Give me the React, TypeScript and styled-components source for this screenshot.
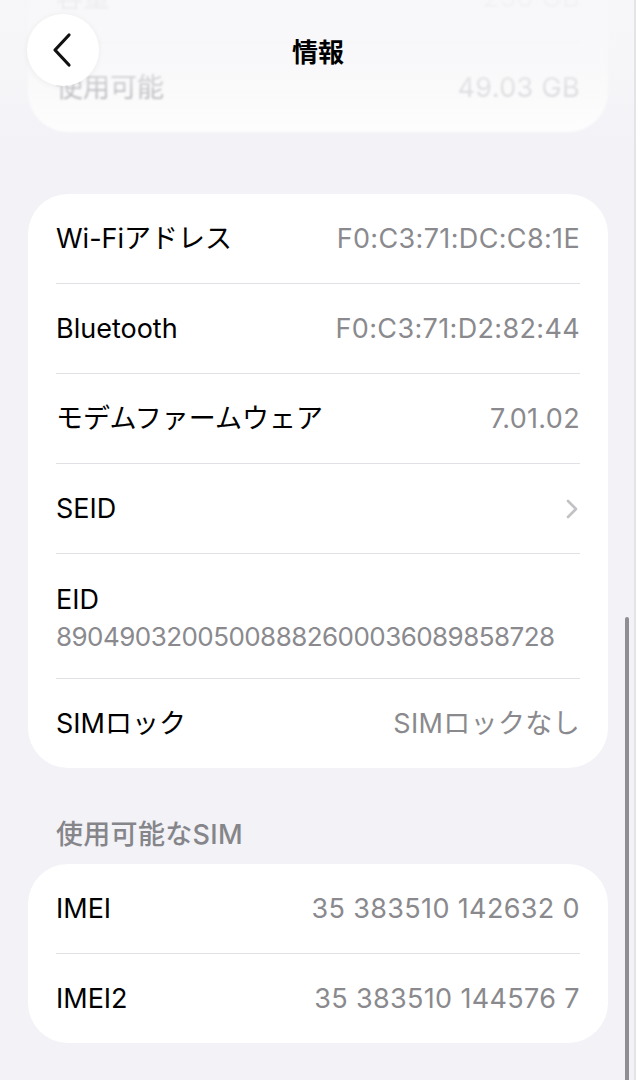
import React from "react";
import styled, { createGlobalStyle } from "styled-components";

const Global = createGlobalStyle`
  html, body { margin: 0; padding: 0; background: #f2f2f7; }
  body {
    font-family: "Inter", "Noto Sans CJK JP", sans-serif;
    -webkit-font-smoothing: antialiased;
    overflow: hidden;
  }
`;

const Screen = styled.div`
  position: relative;
  width: 636px;
  height: 1080px;
  overflow: hidden;
  background: #f2f2f7;
`;

const Content = styled.div`
  display: flex;
  flex-direction: column;
  padding: 0 28px;
  margin-top: -47px;
`;

const Card = styled.div<{ $faded?: boolean; $gap?: number }>`
  background: #ffffff;
  border-radius: 40px;
  padding: 0 28px;
  margin-top: ${(p) => p.$gap ?? 0}px;
  display: flex;
  flex-direction: column;
  ${(p) => (p.$faded ? "filter: blur(1.3px);" : "")}
`;

const Row = styled.div<{ $last?: boolean }>`
  display: flex;
  align-items: center;
  justify-content: space-between;
  height: ${(p) => (p.$last ? 89 : 90)}px;
  box-sizing: border-box;
  border-bottom: ${(p) => (p.$last ? "none" : "1px solid #e1e1e5")};
`;

const StackRow = styled.div`
  display: flex;
  flex-direction: column;
  padding: 28px 0 22px;
  box-sizing: border-box;
  border-bottom: 1px solid #e1e1e5;
`;

const Label = styled.span<{ $faded?: boolean }>`
  font-size: 27px;
  line-height: 36px;
  color: ${(p) => (p.$faded ? "#77777c" : "#000000")};
  letter-spacing: 0px;
`;

const Value = styled.span<{ $faded?: boolean }>`
  font-size: 27px;
  line-height: 36px;
  color: ${(p) => (p.$faded ? "#b9b9bd" : "#8a8a8e")};
  letter-spacing: 0.35px;
`;

const LongValue = styled(Value)`
  font-size: 26px;
  line-height: 38px;
  letter-spacing: -0.55px;
`;

const SectionHeader = styled.div`
  margin: 50px 0 12px 28px;
  font-size: 27px;
  line-height: 34px;
  font-weight: 500;
  color: #85858a;
  letter-spacing: 0.3px;
`;

const NavFade = styled.div`
  position: absolute;
  left: 0;
  top: 0;
  width: 636px;
  height: 150px;
  background: linear-gradient(
    to bottom,
    rgba(247, 247, 249, 0.93) 0%,
    rgba(247, 247, 249, 0.8) 45%,
    rgba(247, 247, 249, 0.35) 80%,
    rgba(247, 247, 249, 0) 100%
  );
  pointer-events: none;
`;

const NavBar = styled.div`
  position: absolute;
  left: 0;
  top: 14px;
  width: 636px;
  height: 72px;
  display: flex;
  align-items: center;
  justify-content: center;
`;

const BackButton = styled.div`
  position: absolute;
  left: 27px;
  top: 0;
  width: 72px;
  height: 72px;
  border-radius: 50%;
  background: #ffffff;
  box-shadow: 0 1px 6px rgba(0, 0, 0, 0.06);
  display: flex;
  align-items: center;
  justify-content: center;
`;

const Title = styled.div`
  font-size: 26px;
  font-weight: 700;
  color: #000;
`;

const ScrollBar = styled.div`
  position: absolute;
  left: 625px;
  top: 617px;
  width: 4px;
  height: 470px;
  border-radius: 2px;
  background: #8f8f93;
`;

const EdgeLine = styled.div`
  position: absolute;
  right: 0;
  top: 0;
  width: 2px;
  height: 1080px;
  background: #e3e3e8;
`;

const Chevron = () => (
  <svg width="16" height="22" viewBox="0 0 16 22">
    <path d="M4 3 L12 11 L4 19" fill="none" stroke="#c2c2c6" strokeWidth="2.6" strokeLinecap="round" strokeLinejoin="round" />
  </svg>
);

const BackIcon = () => (
  <svg width="24" height="36" viewBox="0 0 24 36">
    <path d="M18 3 L4 18 L18 33" fill="none" stroke="#111" strokeWidth="3.2" strokeLinecap="round" strokeLinejoin="round" />
  </svg>
);

export default function App() {
  return (
    <Screen>
      <Global />
      <Content>
        <Card $faded>
          <Row>
            <Label $faded>容量</Label>
            <Value $faded>256 GB</Value>
          </Row>
          <Row $last>
            <Label $faded>使用可能</Label>
            <Value $faded>49.03 GB</Value>
          </Row>
        </Card>

        <Card $gap={62}>
          <Row>
            <Label>Wi-Fiアドレス</Label>
            <Value>F0:C3:71:DC:C8:1E</Value>
          </Row>
          <Row>
            <Label>Bluetooth</Label>
            <Value>F0:C3:71:D2:82:44</Value>
          </Row>
          <Row>
            <Label>モデムファームウェア</Label>
            <Value>7.01.02</Value>
          </Row>
          <Row>
            <Label>SEID</Label>
            <Chevron />
          </Row>
          <StackRow>
            <Label>EID</Label>
            <LongValue>89049032005008882600036089858728</LongValue>
          </StackRow>
          <Row $last>
            <Label>SIMロック</Label>
            <Value>SIMロックなし</Value>
          </Row>
        </Card>

        <SectionHeader>使用可能なSIM</SectionHeader>

        <Card>
          <Row>
            <Label>IMEI</Label>
            <Value>35 383510 142632 0</Value>
          </Row>
          <Row $last>
            <Label>IMEI2</Label>
            <Value>35 383510 144576 7</Value>
          </Row>
        </Card>
      </Content>

      <NavFade />
      <NavBar>
        <BackButton>
          <BackIcon />
        </BackButton>
        <Title>情報</Title>
      </NavBar>
      <ScrollBar />
      <EdgeLine />
    </Screen>
  );
}
